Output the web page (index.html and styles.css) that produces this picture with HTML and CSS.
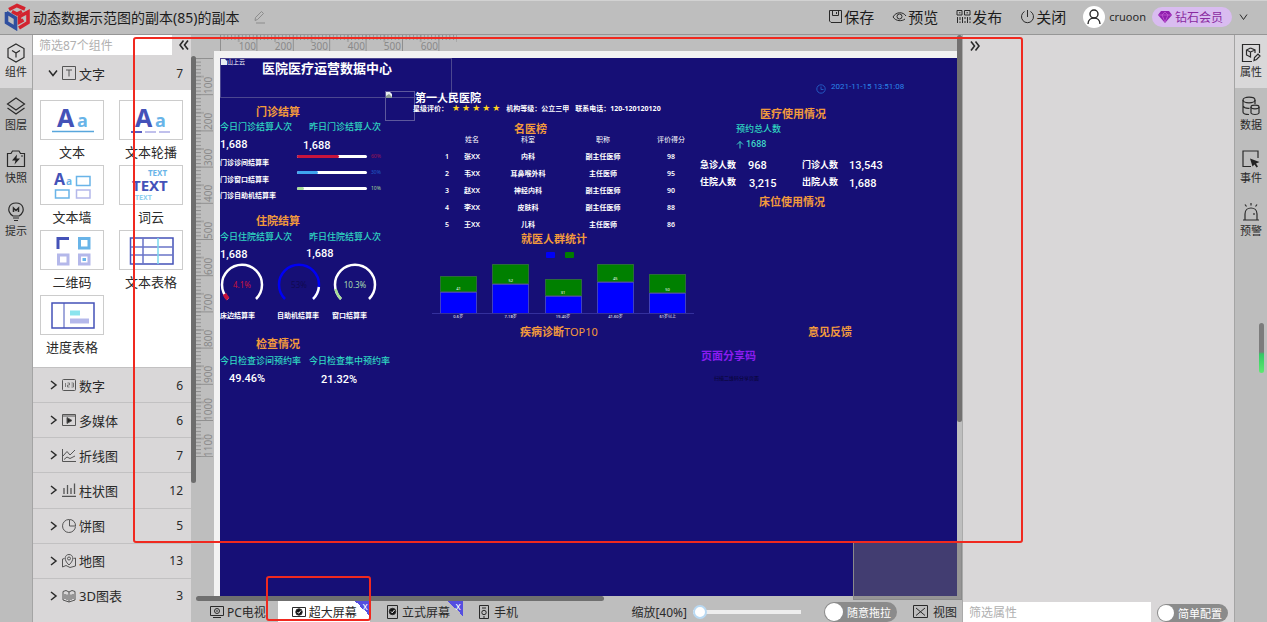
FILE: index.html
```html
<!DOCTYPE html>
<html lang="zh-CN">
<head>
<meta charset="utf-8">
<title>动态数据示范图的副本(85)的副本</title>
<link rel="stylesheet" href="styles.css">
</head>
<body>
<header class="topbar">
  <svg class="logo" viewBox="0 0 26 28" width="26" height="28" fill="none" stroke-width="3.6">
    <path d="M5 6.500 L13 2.500 L21 6 M8 8.500 L13 11 L18 8.500" stroke="#d3232f"/>
    <path d="M2.500 9 V19.500 L11.500 25 V15 L2.500 9.500" stroke="#2f4f9f"/>
    <path d="M15 25 L24 19.500 V9 L15.500 13.500 V19 L19.500 17" stroke="#d3232f"/>
  </svg>
  <h1 class="doc-title">动态数据示范图的副本(85)的副本</h1>
  <svg class="pencil" viewBox="0 0 14 14" width="14" height="14" fill="none" stroke="#8c8c8c"><path d="M3 10.500 L3.500 7.500 L9.500 1.500 L11.500 3.500 L5.500 9.500 Z M4 13 H13"/></svg>
  <nav class="actions">
    <button class="action"><svg viewBox="0 0 15 15" width="15" height="15"><path d="M1.500 1.500 H13.500 V13.500 H3 L1.500 12 Z M4.500 1.500 V6.500 H10.500 V1.500 M8.500 3 V5"/></svg>保存</button>
    <button class="action"><svg viewBox="0 0 15 15" width="15" height="15"><path d="M1 8 C4 2.500 11 2.500 14 7 M1 8 C4 12.500 10 12.500 13 10"/><circle cx="7.500" cy="7.500" r="2.500"/></svg>预览</button>
    <button class="action"><svg viewBox="0 0 15 15" width="15" height="15"><path d="M1 1.500 H6 V6 H1 Z M8.500 1.500 H14 V6 H8.500 Z M3 3.800 H4.500 M10.500 3.800 H12 M1.500 8 V14 M4 8 V11 M4 12.500 V14 M6.500 8 V14 M9 8 V10 M9 12 V14 M11.500 8 V14 M14 8 V11 M14 12.500 V14"/></svg>发布</button>
    <button class="action"><svg viewBox="0 0 15 15" width="15" height="15"><path d="M7.500 1 V8 M4.500 2.500 A6 6 0 1 0 10.500 2.500"/></svg>关闭</button>
  </nav>
  <div class="account">
    <span class="avatar"><svg viewBox="0 0 18 18" width="18" height="18"><circle cx="9" cy="6" r="4"/><path d="M3 16 C3 8 15 8 15 16"/></svg></span>
    <span class="user">cruoon</span>
    <span class="vip"><svg viewBox="0 0 14 12" width="14" height="12"><path d="M3 0 H11 L14 4 L7 12 L0 4 Z" fill="#8f1fae"/><path d="M0 4 H14 M4 4 L7 11 L10 4 L7 1 Z" stroke="#c860d8" stroke-width="0.700" fill="none"/></svg>钻石会员</span>
    <svg class="caret" viewBox="0 0 9 8" width="9" height="8"><path d="M1 1.500 L4.500 6.500 L8 1.500"/></svg>
  </div>
</header>

<main class="workspace">
  <nav class="rail rail-left">
    <button class="rail-item active"><svg viewBox="0 0 20 20" width="20" height="20"><path d="M10 1 L18 5.500 V14.500 L10 19 L2 14.500 V5.500 Z M6 7.500 L10 10 L14 7.500 M10 10 V14.500"/></svg>组件</button>
    <button class="rail-item"><svg viewBox="0 0 20 20" width="20" height="20"><path d="M10 2 L18.500 8 L10 14 L1.500 8 Z M1.500 12 L10 18 L18.500 12"/></svg>图层</button>
    <button class="rail-item"><svg viewBox="0 0 20 20" width="20" height="20"><path d="M1.500 4.500 H5 L6.500 2 H13 L14.500 4.500 H18.500 V17.500 H1.500 Z M15 7 H17"/><path d="M11 5.500 L6 11.500 H9.500 L8.500 15.500 L14 9.500 H10.500 Z" fill="#222" stroke="none"/></svg>快照</button>
    <button class="rail-item"><svg viewBox="0 0 20 20" width="20" height="20"><path d="M7 14 C-0.500 9 3 1 10 1 S20.500 9 13 14 Z M7 16 H13 M8 18.500 H12"/><path d="M7.500 10 V6 L10 8.500 L12.500 6 V10" stroke-width="1.500"/></svg>提示</button>
  </nav>

  <aside class="library">
    <div class="library-body">
      <div class="search-row">
        <input class="search" type="text" placeholder="筛选87个组件" aria-label="筛选组件">
        <button class="fold" aria-label="收起"><svg viewBox="0 0 10 10" width="10" height="10"><path d="M4.500 0.500 L1 5 L4.500 9.500 M9 0.500 L5.500 5 L9 9.500"/></svg></button>
      </div>
      <button class="group open"><svg class="chev" viewBox="0 0 10 10" width="10" height="10"><path d="M1 2.500 L5 7.500 L9 2.500"/></svg><svg class="gicon" viewBox="0 0 14 14" width="14" height="14"><path d="M0.500 0.500 H13.500 V13.500 H0.500 Z M4 4 H10 M7 4 V10.500"/></svg>文字<span class="count">7</span></button>
      <div class="cards">
        <button class="card"><span class="thumb"><svg viewBox="0 0 62 38" width="62" height="38"><text x="16" y="26" font-size="25" font-weight="700" fill="#4452b8">A</text><text x="36" y="26" font-size="18" font-weight="700" fill="#69b4e8">a</text><path d="M11 30.500 H53" stroke="#58a6dc" stroke-width="1.500"/></svg></span>文本</button>
        <button class="card"><span class="thumb"><svg viewBox="0 0 62 38" width="62" height="38"><text x="15" y="26" font-size="25" font-weight="700" fill="#4452b8">A</text><text x="35" y="26" font-size="18" font-weight="700" fill="#69b4e8">a</text><g stroke-width="2"><path d="M11 31 H22" stroke="#5a5fc0"/><path d="M25 31 H36 M39 31 H50" stroke="#c0c0ec"/></g></svg></span>文本轮播</button>
        <button class="card"><span class="thumb"><svg viewBox="0 0 62 38" width="62" height="38" fill="none" stroke-width="1.500"><text x="13" y="19" font-size="16" font-weight="700" fill="#4452b8">A</text><text x="25" y="19" font-size="10" font-weight="700" fill="#69b4e8">a</text><path d="M35.500 10.500 H49 V19.500 H35.500 Z M14.500 24 H28 V32 H14.500 Z" stroke="#69b4e8"/><path d="M35.500 24 H49 V32 H35.500 Z" stroke="#b4b8ea"/></svg></span>文本墙</button>
        <button class="card"><span class="thumb"><svg viewBox="0 0 62 38" width="62" height="38" font-weight="700"><text x="28" y="10" font-size="8" fill="#69b4e8">TEXT</text><text x="12" y="25" font-size="15" fill="#4452b8">TEXT</text><text x="15" y="34" font-size="7" fill="#8fd0f0">TEXT</text></svg></span>词云</button>
        <button class="card"><span class="thumb"><svg viewBox="0 0 62 38" width="62" height="38" fill="none" stroke-width="3"><path d="M17 18 V7.500 H28" stroke="#4452b8"/><path d="M38.500 7.500 H48 V17 H38.500 Z" stroke="#69b4e8"/><path d="M17.500 24 H27 V33 H17.500 Z M38.500 24 H48 V33 H38.500 Z" stroke="#b4b8ea"/><path d="M41.500 28.500 H45" stroke="#69b4e8"/></svg></span>二维码</button>
        <button class="card"><span class="thumb"><svg viewBox="0 0 62 38" width="62" height="38" fill="none" stroke="#4452b8" stroke-width="1.500"><path d="M10.500 7 H53 V33 H10.500 Z"/><path d="M23 7 V33 M11 16 H53 M11 24 H53" stroke="#6a74c8"/><path d="M38 7 V33" stroke="#7bd8ee"/></svg></span>文本表格</button>
        <button class="card"><span class="thumb"><svg viewBox="0 0 62 38" width="62" height="38" fill="none" stroke="#4452b8" stroke-width="1.500"><path d="M11 7 H53 V32 H11 Z"/><path d="M23 7 V32" stroke-width="1"/><path d="M29 17 H39" stroke="#8be4ee" stroke-width="5"/><path d="M29 25 H48" stroke="#b4b8ea" stroke-width="5"/></svg></span>进度表格</button>
      </div>
      <div class="groups">
        <button class="group"><svg class="chev" viewBox="0 0 10 10" width="10" height="10"><path d="M3 1 L8 5 L3 9"/></svg><svg class="gicon" viewBox="0 0 14 14" width="14" height="14"><rect x="0.500" y="1.500" width="13" height="11" rx="1"/><path d="M3.500 5 V9 M5.500 5 H7.500 V7 H5.500 V9 H7.500 M9.500 5 H11.500 V9 H9.500 M9.500 7 H11.500" stroke-width="0.700"/></svg>数字<span class="count">6</span></button>
        <button class="group"><svg class="chev" viewBox="0 0 10 10" width="10" height="10"><path d="M3 1 L8 5 L3 9"/></svg><svg class="gicon" viewBox="0 0 14 14" width="14" height="14"><path d="M0.500 1.500 H13.500 V12.500 H0.500 Z M0.500 3 H13.500"/><path d="M5 4.500 L10 7.500 L5 10.500 Z" fill="#222"/></svg>多媒体<span class="count">6</span></button>
        <button class="group"><svg class="chev" viewBox="0 0 10 10" width="10" height="10"><path d="M3 1 L8 5 L3 9"/></svg><svg class="gicon" viewBox="0 0 14 14" width="14" height="14"><path d="M0.500 1 V13.500 H14 M1 8 L5 3.500 L8 7 L13 2 M2 11.500 L5 9 L8 10.500 L13 8"/></svg>折线图<span class="count">7</span></button>
        <button class="group"><svg class="chev" viewBox="0 0 10 10" width="10" height="10"><path d="M3 1 L8 5 L3 9"/></svg><svg class="gicon" viewBox="0 0 14 14" width="14" height="14"><path d="M0 13.500 H14 M2 5 V11 M5.500 2 V11 M9 5 V11 M12.500 0.500 V11" stroke-width="1.300"/></svg>柱状图<span class="count">12</span></button>
        <button class="group"><svg class="chev" viewBox="0 0 10 10" width="10" height="10"><path d="M3 1 L8 5 L3 9"/></svg><svg class="gicon" viewBox="0 0 14 14" width="14" height="14"><path d="M7 0.500 A6.500 6.500 0 1 0 13.500 7.500 M7.500 0.500 V7 H13.500 A6 6 0 0 0 7.500 0.500"/></svg>饼图<span class="count">5</span></button>
        <button class="group"><svg class="chev" viewBox="0 0 10 10" width="10" height="10"><path d="M3 1 L8 5 L3 9"/></svg><svg class="gicon" viewBox="0 0 14 14" width="14" height="14"><path d="M7 11 C1 5.500 3 0.500 7 0.500 S13 5.500 7 11 Z M2.500 4.500 L0.500 5 V13 L4 11.500 L8 13.500 L13.500 12 V4 L11.500 4.500"/><circle cx="7" cy="4.500" r="1.500"/></svg>地图<span class="count">13</span></button>
        <button class="group"><svg class="chev" viewBox="0 0 10 10" width="10" height="10"><path d="M3 1 L8 5 L3 9"/></svg><svg class="gicon" viewBox="0 0 14 14" width="14" height="14"><path d="M1 2.500 L4 1.500 L7 3 L10 1.500 L13 2.500 V11 L10 12 L7 13 L4 12 L1 11 Z M7 3 V13 M3 5 V10 M5 5.500 V11 M9 5.500 V11 M11 5 V10"/></svg>3D图表<span class="count">3</span></button>
      </div>
    </div>
    <div class="vscroll"><div class="vscroll-thumb"></div></div>
  </aside>

  <section class="editor">
    <div class="board">
      <svg class="ruler-x" width="260" height="16">
        <defs>
          <pattern id="tx" x="6" width="3.640" height="16" patternUnits="userSpaceOnUse"><path d="M0.500 0 V5" stroke="#8f8f8f"/></pattern>
          <pattern id="mx" x="6" width="36.400" height="16" patternUnits="userSpaceOnUse"><path d="M0.500 0 V16 M18.700 0 V7" stroke="#8f8f8f"/></pattern>
        </defs>
        <rect x="6" width="237" height="16" fill="url(#tx)"/><rect x="6" width="237" height="16" fill="url(#mx)"/>
        <g class="ruler-text" text-anchor="end"><text x="42" y="15">100</text><text x="78" y="15">200</text><text x="114" y="15">300</text><text x="151" y="15">400</text><text x="187" y="15">500</text><text x="224" y="15">600</text></g>
      </svg>
      <svg class="ruler-y" width="18" height="420">
        <defs>
          <pattern id="ty" y="7" width="18" height="3.620" patternUnits="userSpaceOnUse"><path d="M0 0.500 H5" stroke="#8f8f8f"/></pattern>
          <pattern id="my" y="7" width="18" height="36.200" patternUnits="userSpaceOnUse"><path d="M0 0.500 H17 M0 18.600 H8" stroke="#8f8f8f"/></pattern>
        </defs>
        <rect y="7" width="18" height="399" fill="url(#ty)"/><rect y="7" width="18" height="399" fill="url(#my)"/>
        <g class="ruler-text"><text transform="translate(16 43) rotate(-90)">100</text><text transform="translate(16 79) rotate(-90)">200</text><text transform="translate(16 115) rotate(-90)">300</text><text transform="translate(16 151) rotate(-90)">400</text><text transform="translate(16 188) rotate(-90)">500</text><text transform="translate(16 224) rotate(-90)">600</text><text transform="translate(16 260) rotate(-90)">700</text><text transform="translate(16 296) rotate(-90)">800</text><text transform="translate(16 332) rotate(-90)">900</text><text transform="translate(16 370) rotate(-90)">1000</text><text transform="translate(16 406) rotate(-90)">1100</text></g>
      </svg>
      <div class="paper">
        <div class="sheet">
          <div class="w image-a"><svg viewBox="0 0 6 6" width="6" height="6"><path d="M0 0 H4 L6 2 V6 H0 Z" fill="#e8eef2"/></svg>山上云</div>
          <div class="w image-b"><svg viewBox="0 0 6 6" width="6" height="6"><path d="M0 0 H4 L6 2 V6 H0 Z" fill="#e8eef2"/><path d="M0 4 L3 2 L6 5 V6 H0 Z" fill="#8a9a90"/></svg></div>
          <h2 class="w board-title">医院医疗运营数据中心</h2>

          <h3 class="w head h-clinic">门诊结算</h3>
          <div class="w sub s-clinic-today">今日门诊结算人次</div>
          <div class="w sub s-clinic-yest">昨日门诊结算人次</div>
          <div class="w num n-clinic-today">1,688</div>
          <div class="w num n-clinic-yest">1,688</div>
          <div class="w tiny t-room">门诊诊间结算率</div>
          <div class="w tiny t-window">门诊窗口结算率</div>
          <div class="w tiny t-self">门诊自助机结算率</div>
          <div class="w bars">
            <div class="bar red"><i><b style="width:60%"></b></i>60%</div>
            <div class="bar blue"><i><b style="width:30%"></b></i>30%</div>
            <div class="bar green"><i><b style="width:10%"></b></i>10%</div>
          </div>

          <h3 class="w head h-ward">住院结算</h3>
          <div class="w sub s-ward-today">今日住院结算人次</div>
          <div class="w sub s-ward-yest">昨日住院结算人次</div>
          <div class="w num n-ward-today">1,688</div>
          <div class="w num n-ward-yest">1,688</div>
          <svg class="w gauges" width="160" height="44" viewBox="0 0 160 44" fill="none" stroke-width="2.500">
            <path d="M8 37 A20 20 0 1 1 36 37" stroke="#fff"/><path d="M8 37 A20 20 0 0 1 4.500 32" stroke="#c8143c" stroke-width="4"/>
            <path d="M65 37 A20 20 0 1 1 93 37" stroke="#0000f4"/><path d="M98.900 25 A20 20 0 0 1 93 37" stroke="#fff"/>
            <path d="M121 37 A20 20 0 1 1 149 37" stroke="#fff"/><path d="M121 37 A20 20 0 0 1 115.600 27" stroke="#a8dc98"/>
            <g text-anchor="middle" stroke="none" font-size="8"><text x="22" y="26" fill="#c8143c">4.1%</text><text x="79" y="26" fill="#100a50">53%</text><text x="135" y="26" fill="#a8dcb0">10.3%</text></g>
          </svg>
          <div class="w tiny t-bed">床边结算率</div>
          <div class="w tiny t-selfpay">自助机结算率</div>
          <div class="w tiny t-winpay">窗口结算率</div>

          <h3 class="w head h-exam">检查情况</h3>
          <div class="w sub s-exam-room">今日检查诊间预约率</div>
          <div class="w sub s-exam-center">今日检查集中预约率</div>
          <div class="w num n-exam-room">49.46%</div>
          <div class="w num n-exam-center">21.32%</div>

          <h3 class="w hospital">第一人民医院</h3>
          <div class="w tiny t-info"><span>星级评价：</span><span class="stars">★★★★★</span><span>机构等级：公立三甲</span><span>联系电话：120-120120120</span></div>

          <h3 class="w head h-doctors">名医榜</h3>
          <table class="w doctors">
            <colgroup><col class="c1"><col class="c2"><col class="c3"><col class="c4"><col class="c5"></colgroup>
            <thead><tr><th></th><th>姓名</th><th>科室</th><th>职称</th><th>评价得分</th></tr></thead>
            <tbody>
              <tr><td>1</td><td>张XX</td><td>内科</td><td>副主任医师</td><td>98</td></tr>
              <tr><td>2</td><td>韦XX</td><td>耳鼻喉外科</td><td>主任医师</td><td>95</td></tr>
              <tr><td>3</td><td>赵XX</td><td>神经内科</td><td>副主任医师</td><td>90</td></tr>
              <tr><td>4</td><td>李XX</td><td>皮肤科</td><td>副主任医师</td><td>88</td></tr>
              <tr><td>5</td><td>王XX</td><td>儿科</td><td>主任医师</td><td>86</td></tr>
            </tbody>
          </table>

          <h3 class="w head h-crowd">就医人群统计</h3>
          <div class="w legend"><i class="k-blue"></i><i class="k-green"></i></div>
          <div class="w stack">
            <div class="col"><div class="g" style="height:16px">41</div><div class="b" style="height:21px"></div></div>
            <div class="col"><div class="g" style="height:20px">52</div><div class="b" style="height:29px"></div></div>
            <div class="col"><div class="g" style="height:17px">31</div><div class="b" style="height:17px"></div></div>
            <div class="col"><div class="g" style="height:18px">45</div><div class="b" style="height:31px"></div></div>
            <div class="col"><div class="g" style="height:19px">50</div><div class="b" style="height:20px"></div></div>
          </div>
          <div class="w axis"><span>0-6岁</span><span>7-18岁</span><span>19-40岁</span><span>41-60岁</span><span>61岁以上</span></div>

          <h3 class="w head h-top">疾病诊断<span class="thin">TOP10</span></h3>
          <h3 class="w head h-feedback">意见反馈</h3>
          <h3 class="w share">页面分享码</h3>
          <div class="w share-note">扫描二维码分享页面</div>

          <div class="w clock"><svg viewBox="0 0 10 10" width="10" height="10" fill="none" stroke="#2358c0"><circle cx="5" cy="5" r="4.200"/><path d="M5 2.500 V5.500 H7.500"/></svg></div>
          <div class="w time">2021-11-15 13:51:08</div>
          <h3 class="w head h-usage">医疗使用情况</h3>
          <div class="w sub s-total">预约总人数</div>
          <div class="w total"><svg viewBox="0 0 8 9" width="8" height="9" fill="none" stroke="#3fd8c8"><path d="M4 8.500 V1.500 M1 4.500 L4 1.500 L7 4.500"/></svg>1688</div>
          <div class="w lab l-er">急诊人数</div><div class="w num n-er">968</div>
          <div class="w lab l-op">门诊人数</div><div class="w num n-op">13,543</div>
          <div class="w lab l-in">住院人数</div><div class="w num n-in">3,215</div>
          <div class="w lab l-out">出院人数</div><div class="w num n-out">1,688</div>
          <h3 class="w head h-beds">床位使用情况</h3>
        </div>
      </div>
      <div class="board-vscroll"></div>
      <div class="board-hscroll"></div>
      <div class="minimap"></div>
    </div>
    <footer class="bottombar">
      <div class="tabs">
        <button class="tab"><svg viewBox="0 0 14 12" width="14" height="12"><path d="M0.500 0.500 H13.500 V9.500 H0.500 Z M3 11.500 H11"/><circle cx="7" cy="5" r="2.500"/><path d="M6 5 H8"/></svg>PC电视</button>
        <button class="tab on"><svg viewBox="0 0 14 10" width="14" height="10"><path d="M0.500 0.500 H13.500 V9.500 H0.500 Z"/><circle cx="7" cy="5" r="3.200" fill="#111"/><path class="tick" d="M5.500 5 L6.700 6.300 L9 3.500"/></svg>超大屏幕<span class="corner">x</span></button>
        <button class="tab tall"><svg viewBox="0 0 11 14" width="11" height="14"><path d="M0.500 0.500 H10.500 V13.500 H0.500 Z"/><circle cx="5.500" cy="6.500" r="3.200" fill="#111"/><path class="tick" d="M4 6.500 L5.200 7.800 L7.500 5"/></svg>立式屏幕<span class="corner">x</span></button>
        <button class="tab phone"><svg viewBox="0 0 10 14" width="10" height="14"><path d="M0.500 0.500 H9.500 V13.500 H0.500 Z M3 3 H7 M4 12 H6"/><circle cx="5" cy="7.500" r="2.200"/></svg>手机</button>
      </div>
      <label class="zoom">缩放[40%]<input type="range" min="0" max="100" value="0"></label>
      <label class="switch"><input type="checkbox">随意拖拉</label>
      <button class="view"><svg viewBox="0 0 15 13" width="15" height="13"><path d="M0.500 0.500 H14.500 V12.500 H0.500 Z M3 3 L12 10.500 M12 3 L3 10.500"/></svg>视图</button>
    </footer>
  </section>

  <aside class="props">
    <button class="unfold" aria-label="展开"><svg viewBox="0 0 10 10" width="10" height="10"><path d="M1 0.500 L4.500 5 L1 9.500 M5.500 0.500 L9 5 L5.500 9.500"/></svg></button>
    <div class="props-foot">
      <input class="search" type="text" placeholder="筛选属性" aria-label="筛选属性">
      <label class="switch"><input type="checkbox">简单配置</label>
    </div>
  </aside>

  <nav class="rail rail-right">
    <button class="rail-item active"><svg viewBox="0 0 20 20" width="20" height="20"><path d="M18.500 10 V1.500 H1.500 V18.500 H11 M9.500 5 L14 7 V10 M9.500 5 L5.500 7 V12 L9.500 14 V9 L5.500 7 M9.500 9 L14 7 M13 17.500 L13.500 14.500 L17 11 L19 13 L15.500 16.500 Z"/></svg>属性</button>
    <button class="rail-item"><svg viewBox="0 0 20 20" width="20" height="20"><ellipse cx="8" cy="4" rx="6" ry="2.800"/><path d="M2 4 V16 C2 18 6 18.500 8 18.500 M14 4 V8 M2 10 C3 12 6 12.500 8.500 12.300"/><ellipse cx="14" cy="11" rx="4" ry="1.800"/><path d="M10 11 V17 C11 19 17 19 18 17 V11"/></svg>数据</button>
    <button class="rail-item"><svg viewBox="0 0 20 20" width="20" height="20"><path d="M17 9 V2 H2 V17.500 H10"/><path d="M9 9.500 L18.500 13 L15 14.500 L17 17.500 L15.500 18.500 L13.500 15.500 L11.500 17.500 Z" fill="#222" stroke="none"/></svg>事件</button>
    <button class="rail-item"><svg viewBox="0 0 20 20" width="20" height="20"><path d="M2 18 H18 M4 18 V12 C4 4 16 4 16 12 V18 M10 1 V3.500 M4 2.500 L5.500 4.500 M16 2.500 L14.500 4.500 M13 11 V13"/></svg>预警</button>
    <div class="edge-thumb"></div>
  </nav>
</main>
<div class="mark mark-canvas"></div>
<div class="mark mark-tab"></div>
</body>
</html>
```
FILE: styles.css
```css
* { box-sizing: border-box; }
body {
  margin: 0; height: 100vh; display: flex; flex-direction: column; overflow: hidden; position: relative;
  background: #bebebe; color: #2a2a2a;
  font-family: "Noto Sans", "Noto Sans CJK SC", sans-serif; font-size: 13px;
}
button { font: inherit; color: inherit; border: 0; background: none; padding: 0; margin: 0; }
svg { display: block; flex: none; }
h1, h2, h3 { margin: 0; }

.topbar { flex: none; height: 35px; display: flex; align-items: center; padding: 0 19px 2px 4px; border-bottom: 1px solid #969696; border-top: 1px solid #d2d2d2; background: #bebebe; }
.doc-title { font-size: 14px; font-weight: 400; margin-left: 3px; white-space: nowrap; color: #1c1c1c; }
.pencil { margin-left: 13px; }
.actions { margin-left: auto; display: flex; gap: 18px; }
.action { display: flex; align-items: center; gap: 1px; font-size: 15px; line-height: 22px; color: #1c1c1c; }
.action svg, .avatar svg, .caret, .rail-item svg, .chev, .gicon, .fold svg, .unfold svg, .tab svg, .view svg { fill: none; stroke: #2a2a2a; }
.account { display: flex; align-items: center; margin-left: 17px; }
.avatar { width: 22px; height: 22px; border-radius: 50%; background: #fff; display: grid; place-items: center; }
.avatar svg { stroke-width: 1.4; }
.user { margin: 0 6px 0 4px; font-size: 11px; }
.vip { display: flex; align-items: center; gap: 3px; height: 20px; padding: 0 9px 0 6px; border-radius: 10px; background: #d9bcf0; color: #8a2aa0; font-size: 12px; }
.caret { margin-left: 7px; }

.workspace { flex: 1; min-height: 0; display: flex; }
.rail { flex: none; width: 33px; background: #bdbdbd; }
.rail-left { border-right: 1px solid #a4a4a4; }
.rail-right { border-left: 1px solid #a4a4a4; position: relative; }
.rail-item { width: 100%; height: 53px; display: flex; flex-direction: column; align-items: center; justify-content: center; gap: 1px; padding-bottom: 1px; font-size: 11px; line-height: 16px; }
.rail-item.active { background: #d9d8d9; }
.rail-item svg { stroke-width: 1.2; }
.edge-thumb { position: absolute; right: 3px; top: 288px; width: 5px; height: 50px; border-radius: 3px; background: linear-gradient(#7c7c7c 58%, #33c865 62%, #5dea70); }

.library { flex: none; width: 163px; display: flex; }
.library-body { flex: 1; display: flex; flex-direction: column; background: #d9d7d8; }
.search-row { flex: none; height: 20px; display: flex; justify-content: space-between; margin-bottom: 1px; }
.search { flex: none; border: 0; background: #fff; padding: 0 6px; font: inherit; font-size: 12px; min-width: 0; width: 139px; height: 20px; }
.search::placeholder { color: #b0b0b0; opacity: 1; }
.fold { width: 14px; display: grid; place-items: center; }
.fold svg, .unfold svg { stroke-width: 1.6; }
.group { flex: 1; display: flex; align-items: center; padding: 0 8px 0 15px; border-top: 1px solid #c2c1c2; text-align: left; }
.group.open { flex: none; height: 34px; border: 0; }
.chev { margin-right: 4px; stroke-width: 1.5; }
.gicon { margin-right: 3px; }
.group .gicon { stroke: #555; }
.count { margin-left: auto; font-size: 12px; }
.cards { flex: none; background: #fff; padding: 10px 7px 0; height: 277px; display: grid; grid-template-columns: 64px 64px; column-gap: 15px; grid-auto-rows: 65px; }
.card { display: flex; flex-direction: column; align-items: center; line-height: 24px; white-space: nowrap; }
.thumb { width: 64px; height: 40px; border: 1px solid #ccc; flex: none; }
.thumb svg { line-height: 1; }
.groups { flex: 1; display: flex; flex-direction: column; padding-bottom: 9px; }
.vscroll { flex: none; width: 5px; background: #bebebe; padding-top: 21px; }
.vscroll-thumb { height: 427px; background: #6d6d6d; border-radius: 3px; }

.editor { flex: 1; min-width: 0; display: flex; flex-direction: column; }
.board { flex: 1; min-height: 0; position: relative; overflow: hidden; display: grid; grid-template-columns: 18px minmax(0, 1fr); grid-template-rows: 16px minmax(0, 1fr); padding: 0 5px 5px 0; }
.ruler-x { grid-column: 2; overflow: visible; }
.ruler-y { grid-row: 2; overflow: visible; }
.ruler-text { font-size: 10px; fill: #8a8a8a; }
.paper { grid-column: 2; grid-row: 2; background: #f2f2f2; padding: 7px 0 0 6px; }
.sheet { position: relative; height: 100%; background: #160f76; overflow: hidden; }
.board-vscroll { position: absolute; right: 0; top: 0; width: 5px; height: 387px; border-radius: 3px; background: #727070; }
.board-hscroll { position: absolute; left: 0; bottom: 0; width: 408px; height: 5px; border-radius: 3px; background: #6f6f6f; }
.minimap { position: absolute; right: 0; bottom: 1px; width: 109px; height: 58px; border: 1px solid #8a8a8a; background: rgba(110, 108, 108, .5); }

.w { position: absolute; white-space: nowrap; line-height: 1; color: #fff; }
.head { font-size: 11px; font-weight: 700; color: #f29a3c; }
.thin { font-weight: 400; }
.sub { font-size: 9px; font-weight: 500; color: #2fd6c0; }
.lab { font-size: 9px; font-weight: 700; }
.num { font-family: Roboto, sans-serif; font-size: 11px; font-weight: 500; }
.tiny { font-size: 7px; font-weight: 700; }
.board-title { left: 42px; top: 4px; font-size: 13px; }
.image-a { left: 0; top: 0; width: 232px; height: 40px; border: 1px solid #4c4790; font-size: 6px; display: flex; }
.image-b { left: 165px; top: 33px; width: 30px; height: 30px; border: 1px solid #5d589c; }
.h-clinic { left: 36px; top: 48px; }
.s-clinic-today { left: 0; top: 64px; }
.s-clinic-yest { left: 89px; top: 64px; }
.n-clinic-today { left: 0; top: 81px; }
.n-clinic-yest { left: 83px; top: 82px; }
.t-room { left: 0; top: 101px; }
.t-window { left: 0; top: 118px; }
.t-self { left: 0; top: 134px; }
.bars { left: 77px; top: 96px; display: grid; gap: 11px; }
.bar { display: flex; align-items: center; gap: 4px; height: 5px; font-size: 5px; }
.bar i { width: 70px; height: 3px; background: #fff; border-radius: 2px; }
.bar b { display: block; height: 100%; border-radius: 2px; }
.red { color: #a01450; } .red b { background: #c8143c; }
.blue { color: #2060c8; } .blue b { background: #3fa4f0; }
.green { color: #a8dc98; } .green b { background: #a8dc98; }
.h-ward { left: 36px; top: 157px; }
.s-ward-today { left: 0; top: 174px; }
.s-ward-yest { left: 89px; top: 174px; }
.n-ward-today { left: 0; top: 191px; }
.n-ward-yest { left: 86px; top: 190px; }
.gauges { left: 0; top: 204px; }
.t-bed { left: 0; top: 254px; }
.t-selfpay { left: 57px; top: 254px; }
.t-winpay { left: 112px; top: 254px; }
.h-exam { left: 36px; top: 280px; }
.s-exam-room { left: 0; top: 298px; }
.s-exam-center { left: 89px; top: 298px; }
.n-exam-room { left: 9px; top: 315px; }
.n-exam-center { left: 101px; top: 316px; }
.hospital { left: 195px; top: 34px; font-size: 11px; }
.t-info { left: 193px; top: 47px; display: flex; gap: 4px; align-items: center; }
.t-info span:last-child { font-size: 7px; margin-left: 2px; }
.stars { color: #ffd21e; font-family: "DejaVu Sans", sans-serif; font-size: 9px; letter-spacing: 2px; line-height: 7px; }
.h-doctors { left: 294px; top: 65px; }
.doctors { left: 215px; top: 73px; width: 272px; table-layout: fixed; border-collapse: collapse; font-size: 7px; font-weight: 500; text-align: center; }
.doctors tr { height: 17px; }
.doctors th, .doctors td { padding: 0; }
.doctors th { font-weight: 400; }
.doctors td { font-weight: 600; }
.c1 { width: 24px; } .c2 { width: 26px; } .c3 { width: 86px; } .c4 { width: 64px; } .c5 { width: 72px; }
.h-crowd { left: 301px; top: 175px; }
.legend { left: 326px; top: 194px; display: flex; gap: 10px; }
.legend i { width: 9px; height: 6px; border-radius: 1px; }
.k-blue { background: #0000f8; } .k-green { background: #007c00; }
.stack { left: 212px; top: 204px; width: 262px; height: 52px; padding: 0 8px; display: flex; justify-content: space-between; align-items: flex-end; border-bottom: 1px solid #34309c; }
.col { width: 37px; }
.g { background: #008000; border: 1px solid #2c6a3c; font-size: 4px; display: flex; align-items: flex-end; justify-content: center; }
.b { background: #0000ff; border: 1px solid #4040c0; border-bottom: 0; }
.axis { left: 212px; top: 257px; width: 262px; display: flex; font-size: 4px; }
.axis span { flex: 1; text-align: center; }
.h-top { left: 300px; top: 268px; }
.h-feedback { left: 588px; top: 268px; }
.share { left: 481px; top: 292px; font-size: 11px; color: #8a1cf0; }
.share-note { left: 494px; top: 318px; font-size: 5px; color: #07042e; }
.clock { left: 596px; top: 26px; }
.time { left: 611px; top: 25px; font-family: Roboto, sans-serif; font-size: 8px; color: #2b86e8; }
.h-usage { left: 540px; top: 50px; }
.s-total { left: 516px; top: 66px; }
.total { left: 516px; top: 82px; display: flex; gap: 2px; font-family: Roboto, sans-serif; font-size: 9px; font-weight: 500; color: #3fd8c8; }
.l-er { left: 480px; top: 102px; } .n-er { left: 528px; top: 102px; }
.l-op { left: 582px; top: 102px; } .n-op { left: 629px; top: 102px; }
.l-in { left: 480px; top: 119px; } .n-in { left: 529px; top: 120px; }
.l-out { left: 582px; top: 119px; } .n-out { left: 629px; top: 120px; }
.h-beds { left: 539px; top: 138px; }

.bottombar { flex: none; height: 21px; display: flex; align-items: center; font-size: 12px; padding-right: 5px; white-space: nowrap; }
.tabs { display: flex; height: 100%; margin-left: 14px; }
.tab { display: flex; align-items: center; gap: 3px; height: 100%; position: relative; }
.tab.on { background: #fff; padding: 0 13px 0 14px; margin-left: 12px; }
.tab.tall { padding: 0 13px 0 17px; gap: 4px; }
.tab.phone { margin-left: 16px; gap: 5px; }
.tab .tick { stroke: #fff; }
.corner { position: absolute; right: 0; top: 0; width: 15px; height: 15px; background: linear-gradient(to top right, transparent 50%, #554fe0 50%); color: #fff; font-size: 10px; line-height: 10px; text-align: right; padding-right: 2px; }
.zoom { margin-left: auto; display: flex; align-items: center; gap: 6px; }
.zoom input { appearance: none; width: 108px; height: 14px; margin: 0; background: linear-gradient(#ededed, #ededed) center / 100% 4px no-repeat; }
.zoom input::-webkit-slider-thumb { appearance: none; width: 14px; height: 14px; border-radius: 50%; background: #fff; border: 2px solid #b9d9f2; }
.switch { display: flex; align-items: center; gap: 4px; height: 20px; padding: 0 6px 0 1px; margin-left: 23px; border-radius: 10px; background: #8b8b8b; color: #fff; font-size: 11px; white-space: nowrap; }
.switch input { appearance: none; margin: 0; width: 18px; height: 18px; border-radius: 50%; background: #fff; }
.view { display: flex; align-items: center; gap: 5px; margin-left: 16px; }

.props { flex: none; width: 272px; background: #d9d7d8; border-left: 1px solid #aaa; display: flex; flex-direction: column; justify-content: space-between; }
.unfold { width: 24px; height: 22px; display: grid; place-items: center; }
.props-foot { display: flex; align-items: flex-end; height: 20px; }
.props-foot .search { width: 188px; }
.props-foot .switch { margin-left: 6px; height: 18px; }
.props-foot .switch input { width: 16px; height: 16px; }

.mark { position: absolute; border: 2px solid #f0291f; border-radius: 3px; pointer-events: none; }
.mark-canvas { left: 133px; top: 37px; width: 890px; height: 506px; }
.mark-tab { left: 266px; top: 576px; width: 105px; height: 45px; }
```
